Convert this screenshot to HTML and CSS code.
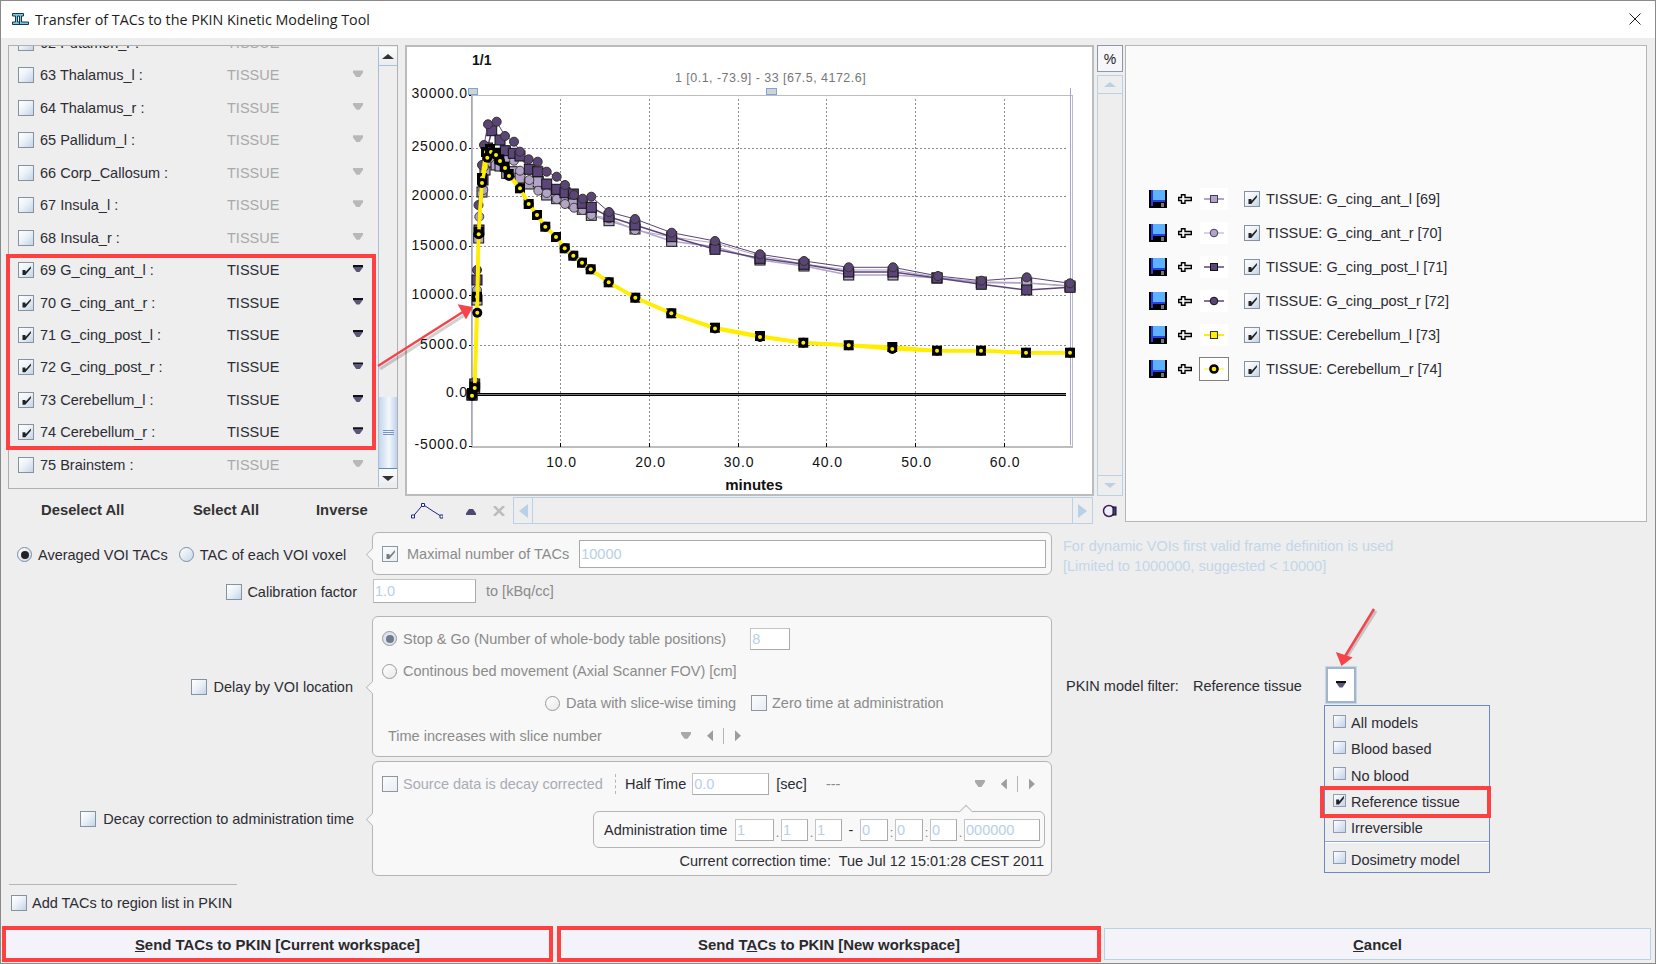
FILE: index.html
```html
<!DOCTYPE html>
<html lang="en">
<head>
<meta charset="utf-8">
<title>Transfer of TACs to the PKIN Kinetic Modeling Tool</title>
<link rel="stylesheet" href="styles.css">
</head>
<body>
<svg class="defs" width="0" height="0" aria-hidden="true">
  <symbol id="save" viewBox="0 0 18 18">
    <rect width="18" height="18" fill="#000"/>
    <rect x="2" y="0" width="2" height="16" fill="#2a3fe0"/>
    <rect x="4" y="0" width="12" height="10" fill="#5cb2ff"/>
    <rect x="4" y="10" width="12" height="2" fill="#2a3fe0"/>
    <rect x="12" y="13" width="3" height="4" fill="#777"/>
  </symbol>
  <symbol id="plus" viewBox="0 0 14 10">
    <path d="M3.500 .7h3.500v2.800h6.300v3H7v2.800H3.500V6.500H.7v-3h2.800z" fill="#fff" stroke="#000" stroke-width="1.400"/>
  </symbol>
</svg>

<header class="titlebar">
  <svg class="applogo" viewBox="0 0 17 12" width="17" height="12">
    <path d="M.5 .5h11v2.500H9.500v6h7v2.500H7.500V3H5.500v6H7.500v2.500H.5V9h3V3H.5z" fill="#7cc6e2" stroke="#12384a"/>
  </svg>
  <span class="title-text">Transfer of TACs to the PKIN Kinetic Modeling Tool</span>
  <svg class="close" viewBox="0 0 12 12" width="12" height="12"><path d="M.5.500l11 11M11.500.500l-11 11" stroke="#222" fill="none"/></svg>
</header>

<section class="top">
  <div class="list-col">
    <div class="listbox">
      <div class="rows">
        <div class="row off"><i class="cb"></i><span class="name">62 Putamen_r :</span><span class="kind">TISSUE</span><i class="tri"></i></div>
        <div class="row off"><i class="cb"></i><span class="name">63 Thalamus_l :</span><span class="kind">TISSUE</span><i class="tri"></i></div>
        <div class="row off"><i class="cb"></i><span class="name">64 Thalamus_r :</span><span class="kind">TISSUE</span><i class="tri"></i></div>
        <div class="row off"><i class="cb"></i><span class="name">65 Pallidum_l :</span><span class="kind">TISSUE</span><i class="tri"></i></div>
        <div class="row off"><i class="cb"></i><span class="name">66 Corp_Callosum :</span><span class="kind">TISSUE</span><i class="tri"></i></div>
        <div class="row off"><i class="cb"></i><span class="name">67 Insula_l :</span><span class="kind">TISSUE</span><i class="tri"></i></div>
        <div class="row off"><i class="cb"></i><span class="name">68 Insula_r :</span><span class="kind">TISSUE</span><i class="tri"></i></div>
        <div class="row"><i class="cb on"></i><span class="name">69 G_cing_ant_l :</span><span class="kind">TISSUE</span><i class="tri on"></i></div>
        <div class="row"><i class="cb on"></i><span class="name">70 G_cing_ant_r :</span><span class="kind">TISSUE</span><i class="tri on"></i></div>
        <div class="row"><i class="cb on"></i><span class="name">71 G_cing_post_l :</span><span class="kind">TISSUE</span><i class="tri on"></i></div>
        <div class="row"><i class="cb on"></i><span class="name">72 G_cing_post_r :</span><span class="kind">TISSUE</span><i class="tri on"></i></div>
        <div class="row"><i class="cb on"></i><span class="name">73 Cerebellum_l :</span><span class="kind">TISSUE</span><i class="tri on"></i></div>
        <div class="row"><i class="cb on"></i><span class="name">74 Cerebellum_r :</span><span class="kind">TISSUE</span><i class="tri on"></i></div>
        <div class="row off"><i class="cb"></i><span class="name">75 Brainstem :</span><span class="kind">TISSUE</span><i class="tri"></i></div>
      </div>
      <div class="vscroll">
        <div class="vbtn"><i class="glyph up"></i></div>
        <div class="vtrack"></div>
        <div class="vthumb"><b></b><b></b><b></b></div>
        <div class="vbtn"><i class="glyph down"></i></div>
      </div>
      <div class="redbox list-red"></div>
    </div>
    <div class="select-row">
      <span>Deselect All</span><span>Select All</span><span>Inverse</span>
    </div>
  </div>

  <div class="chart-col">
    <div class="chart-row">
      <div class="plot">
        <svg viewBox="405 45 689 450" width="689" height="450">
          <defs>
            <marker id="ls" markerUnits="userSpaceOnUse" markerWidth="13" markerHeight="13" refX="6.500" refY="6.500"><rect x="1.500" y="1.500" width="10" height="10" fill="#b2a3c9" stroke="#111"/></marker>
            <marker id="lc" markerUnits="userSpaceOnUse" markerWidth="13" markerHeight="13" refX="6.500" refY="6.500"><circle cx="6.500" cy="6.500" r="4.500" fill="#b2a3c9" stroke="#443"/></marker>
            <marker id="ds" markerUnits="userSpaceOnUse" markerWidth="13" markerHeight="13" refX="6.500" refY="6.500"><rect x="1.500" y="1.500" width="10" height="10" fill="#5a4478" stroke="#111"/></marker>
            <marker id="dc" markerUnits="userSpaceOnUse" markerWidth="13" markerHeight="13" refX="6.500" refY="6.500"><circle cx="6.500" cy="6.500" r="4.500" fill="#5a4478" stroke="#332"/></marker>
            <marker id="ys" markerUnits="userSpaceOnUse" markerWidth="13" markerHeight="13" refX="6.500" refY="6.500"><rect x="1.500" y="1.500" width="10" height="10" fill="#000"/><circle cx="6.500" cy="6.500" r="2" fill="#ffee00"/></marker>
            <marker id="yc" markerUnits="userSpaceOnUse" markerWidth="13" markerHeight="13" refX="6.500" refY="6.500"><circle cx="6.500" cy="6.500" r="5" fill="#000"/><circle cx="6.500" cy="6.500" r="2" fill="#ffee00"/></marker>
          </defs>

          <g class="grid">
            <path d="M560.500 99V446M649.500 99V446M738 99V446M826.500 99V446M915.500 99V446M1004 99V446"/>
            <path d="M472 148.500H1066M472 196.500H1066M472 246.500H1066M472 295.500H1066M472 345.500H1066"/>
          </g>
          <path class="frame" d="M472 95.500H1072V446M472 95.500V446"/>
          <path class="frame-b" d="M471 446.500H1073"/>
          <path class="ticks" d="M560.500 443V447M649.500 443V447M738 443V447M826.500 443V447M915.500 443V447M1004 443V447M469 95.500H472M469 148.500H472M469 196.500H472M469 246.500H472M469 295.500H472M469 345.500H472M469 446H472"/>
          <path class="zero" d="M472 394.500H1066"/>
          <path class="zero-in" d="M472 394.500H1066"/>
          <path class="range" d="M471.500 92V445M1070.500 88V445"/>
          <rect class="handle" x="468.500" y="88.500" width="9" height="6"/>
          <rect class="handle" x="766.500" y="88.500" width="10" height="6"/>

          <text class="ylab" x="468" y="98">30000.0</text>
          <text class="ylab" x="468" y="151">25000.0</text>
          <text class="ylab" x="468" y="200">20000.0</text>
          <text class="ylab" x="468" y="250">15000.0</text>
          <text class="ylab" x="468" y="299">10000.0</text>
          <text class="ylab" x="468" y="349">5000.0</text>
          <text class="ylab" x="468" y="397">0.0</text>
          <text class="ylab" x="468" y="449">-5000.0</text>
          <text class="xlab" x="561.500" y="467">10.0</text>
          <text class="xlab" x="650.500" y="467">20.0</text>
          <text class="xlab" x="739" y="467">30.0</text>
          <text class="xlab" x="827.500" y="467">40.0</text>
          <text class="xlab" x="916.500" y="467">50.0</text>
          <text class="xlab" x="1005" y="467">60.0</text>
          <text class="axis-title" x="754" y="490">minutes</text>
          <text class="page-no" x="472" y="65">1/1</text>
          <text class="range-text" x="675" y="82">1 [0.1, -73.9] - 33 [67.5, 4172.6]</text>

          <polyline class="s-light" marker-start="url(#ls)" marker-mid="url(#ls)" marker-end="url(#ls)" points="472,395 474.700,388 477,300 478.700,238 482,192 485,170 490,162 496,165 500,166 506.700,173.300 514,171.700 520,178 529.300,184 538.300,181.700 546.700,195 556.700,198.700 565,199 573.300,203.300 582.300,209.300 591.300,215.300 609,220.700 635,229 671.700,241.300 715,246.700 760,260 804,266 848.700,275 893,275 937,278 981.300,282 1026.700,283 1070,286"/>
          <polyline class="s-light2" marker-start="url(#lc)" marker-mid="url(#lc)" marker-end="url(#lc)" points="472,395 474.700,385 477,290 479.300,216.700 483.300,190 484,167 490,158 500,155 507,158 514,160.700 520,170.700 529.300,180 538.300,190.700 546.700,193 556.700,199 565,204 574,207.700 582.700,210 591.300,215 609,218.300 635,230 671.700,237 715,243 760,256 804,264 848.700,270 893,270 937,277 981.300,283 1026.700,283 1070,286"/>
          <polyline class="s-dark" marker-start="url(#ds)" marker-mid="url(#ds)" marker-end="url(#ds)" points="472,395 474.700,384 477,280 479,230 483,180 487.500,148 491.700,130.700 500,140 505.300,150.700 513.300,153.300 520,156 529.300,169.300 537.700,171.700 546.700,184 556.700,189.300 565,192.700 573.300,194 582.300,203.300 591.300,207.300 609,216.700 635,225 671.700,236.700 715,249.300 760,258.300 804,264.300 848.700,272 893,272 937,278 981.300,284.300 1026.700,290 1070,287.300"/>
          <polyline class="s-dark2" marker-start="url(#dc)" marker-mid="url(#dc)" marker-end="url(#dc)" points="472,395 474.700,382 477,270 478.500,205 482,165 484,145 488,124.300 496.700,121.700 505,136 514,141.700 520,151.700 528.700,159.300 537.700,161.700 546.700,171.700 556.700,176.700 565,185 574,195 582.700,198.700 591.300,196.700 609,212 635,219 671.700,232.700 715,241 760,254.300 804,261 848.700,267.300 893,267.300 938,276 981.300,280.700 1026.700,277.300 1070,283.300"/>
          <polyline class="s-yellow" marker-start="url(#ys)" marker-mid="url(#ys)" marker-end="url(#ys)" points="472,393 474.700,386.700 477,296.700 478.700,232 482,178 486,152 490,149 496,152.700 499.300,159.300 504.700,166.700 508.700,174 520,188.300 528.700,204 537,215 545.300,226.700 556,237 564.700,248.300 573.300,255.700 582,262.700 590.700,269.300 608.700,282.300 635.300,297.700 671.300,313.300 715,327.700 760,336 803.300,342.700 848.700,345.300 892.300,347 937,350.700 981,350.700 1026,352.700 1070,352.700"/>
          <polyline class="s-yellow" marker-start="url(#yc)" marker-mid="url(#yc)" marker-end="url(#yc)" points="472,395.700 474.700,388 477.300,312.700 478.700,234.300 482,183 487.300,157.700 491,152 496,155 500,161 505,168 509,176 520,188.300 528.700,204 537,215 545.300,226.700 556,237 564.700,248.300 573.300,255.700 582,262.700 590.700,269.300 608.700,282.300 635.300,297.700 671.300,313.300 715,328.500 760,337 803.300,342.700 848.700,345.300 892.300,349 937,350.700 981,350.700 1026,352.700 1070,352.700"/>
        </svg>
      </div>
      <div class="side">
        <div class="pct">%</div>
        <div class="side-scroll">
          <div class="side-btn"><i class="glyph up soft"></i></div>
          <div class="side-btn"><i class="glyph down soft"></i></div>
        </div>
      </div>
    </div>
    <div class="tools">
      <svg class="curve" viewBox="0 0 32 16" width="32" height="16">
        <path d="M2 13.500L12 1.500L21 7.500L30.500 13.500" fill="none" stroke="#1a2a80"/>
        <path d="M.5 12h3v3h-3zM10.500.5h3v3h-3zM29 12h3v3h-3z" fill="#fff" stroke="#1a2a80"/>
      </svg>
      <i class="mini-up"></i>
      <svg class="cross" viewBox="0 0 12 10" width="12" height="10"><path d="M1 0l10 10M11 0L1 10" stroke="#bdbdbd" stroke-width="2.500"/></svg>
      <div class="hscroll">
        <div class="hbtn"><i class="glyph left soft"></i></div>
        <div class="hbtn"><i class="glyph right soft"></i></div>
      </div>
      <svg class="camera" viewBox="0 0 16 14" width="16" height="14">
        <circle cx="7" cy="7" r="5.500" fill="#e8f0ff" stroke="#4a1a5a" stroke-width="1.500"/>
        <rect x="11" y="3" width="3" height="8" fill="#4a3a8a" stroke="#111"/>
      </svg>
    </div>
  </div>

  <aside class="legend">
    <div class="leg"><svg class="i-save"><use href="#save"/></svg><svg class="i-plus"><use href="#plus"/></svg>
      <span class="swatch"><svg viewBox="0 0 28 22" width="28" height="22"><path class="sw-light" d="M4 11h20"/><rect class="sw-ls" x="10.500" y="7.500" width="7" height="7"/></svg></span>
      <i class="cb on"></i><span class="leg-text">TISSUE: G_cing_ant_l [69]</span></div>
    <div class="leg"><svg class="i-save"><use href="#save"/></svg><svg class="i-plus"><use href="#plus"/></svg>
      <span class="swatch"><svg viewBox="0 0 28 22" width="28" height="22"><path class="sw-light thin" d="M4 11h20"/><circle class="sw-ls" cx="14" cy="11" r="3.800"/></svg></span>
      <i class="cb on"></i><span class="leg-text">TISSUE: G_cing_ant_r [70]</span></div>
    <div class="leg"><svg class="i-save"><use href="#save"/></svg><svg class="i-plus"><use href="#plus"/></svg>
      <span class="swatch"><svg viewBox="0 0 28 22" width="28" height="22"><path class="sw-dark" d="M4 11h20"/><rect class="sw-ds" x="10.500" y="7.500" width="7" height="7"/></svg></span>
      <i class="cb on"></i><span class="leg-text">TISSUE: G_cing_post_l [71]</span></div>
    <div class="leg"><svg class="i-save"><use href="#save"/></svg><svg class="i-plus"><use href="#plus"/></svg>
      <span class="swatch"><svg viewBox="0 0 28 22" width="28" height="22"><path class="sw-dark" d="M4 11h20"/><circle class="sw-ds" cx="14" cy="11" r="3.800"/></svg></span>
      <i class="cb on"></i><span class="leg-text">TISSUE: G_cing_post_r [72]</span></div>
    <div class="leg"><svg class="i-save"><use href="#save"/></svg><svg class="i-plus"><use href="#plus"/></svg>
      <span class="swatch"><svg viewBox="0 0 28 22" width="28" height="22"><path class="sw-yellow" d="M4 11h20"/><rect class="sw-ys" x="10.500" y="7.500" width="7" height="7"/></svg></span>
      <i class="cb on"></i><span class="leg-text">TISSUE: Cerebellum_l [73]</span></div>
    <div class="leg"><svg class="i-save"><use href="#save"/></svg><svg class="i-plus"><use href="#plus"/></svg>
      <span class="swatch framed"><svg viewBox="0 0 28 22" width="28" height="22"><path class="sw-yellow thin" d="M4 11h20"/><circle class="sw-yc" cx="14" cy="11" r="3.600"/></svg></span>
      <i class="cb on"></i><span class="leg-text">TISSUE: Cerebellum_r [74]</span></div>
  </aside>
</section>

<section class="lower">
  <div class="cell mode-cell">
    <i class="rb on"></i><span class="m1">Averaged VOI TACs</span>
    <i class="rb rb2"></i><span class="m1">TAC of each VOI voxel</span>
  </div>
  <div class="panel p1">
    <i class="cb on dim"></i><span class="dis t1">Maximal number of TACs</span>
    <div class="field grow">10000</div>
  </div>
  <div class="hint">
    <div>For dynamic VOIs first valid frame definition is used</div>
    <div>[Limited to 1000000, suggested &lt; 10000]</div>
  </div>

  <div class="cell end pad15 cal-cell"><i class="cb"></i><span class="m2">Calibration factor</span></div>
  <div class="cal"><div class="field w103">1.0</div><span class="dis">to [kBq/cc]</span></div>
  <div class="empty"></div>

  <div class="cell end pad19"><i class="cb"></i><span class="m2b">Delay by VOI location</span></div>
  <div class="panel p2">
    <div class="pr"><i class="rb dimr on"></i><span class="dis gap6">Stop &amp; Go (Number of whole-body table positions)</span><div class="field w40">8</div></div>
    <div class="pr"><i class="rb dimr"></i><span class="dis gap6">Continous bed movement (Axial Scanner FOV) [cm]</span></div>
    <div class="pr ind163"><i class="rb dimr"></i><span class="dis gap6 w173">Data with slice-wise timing</span><i class="cb dim"></i><span class="dis gap5">Zero time at administration</span></div>
    <div class="pr ind6"><span class="dis w293">Time increases with slice number</span><i class="tri grey"></i><i class="arrow l"></i><i class="vsep"></i><i class="arrow r"></i></div>
  </div>
  <div class="filter-cell">
    <div class="filter">
      <span class="f1">PKIN model filter:</span><span class="f2">Reference tissue</span>
      <div class="filter-btn"><i class="tri on"></i></div>
    </div>
    <div class="menu">
      <div class="mi"><i class="mc"></i>All models</div>
      <div class="mi"><i class="mc"></i>Blood based</div>
      <div class="mi"><i class="mc"></i>No blood</div>
      <div class="mi"><i class="mc on"></i>Reference tissue</div>
      <div class="mi"><i class="mc"></i>Irreversible</div>
      <div class="msep"></div>
      <div class="mi"><i class="mc"></i>Dosimetry model</div>
      <div class="redbox menu-red"></div>
    </div>
  </div>

  <div class="cell end pad18"><i class="cb"></i><span class="m2b">Decay correction to administration time</span></div>
  <div class="panel p3">
    <div class="p3-row">
      <i class="cb dim"></i><span class="faint t3">Source data is decay corrected</span><i class="dash"></i>
      <span class="m3">Half Time</span><div class="field w77">0.0</div><span class="m3 sec">[sec]</span><span class="dis dashes">---</span>
      <i class="tri grey t-grey"></i><i class="arrow l"></i><i class="vsep"></i><i class="arrow r"></i>
    </div>
    <div class="admin">
      <span class="m3 adm-label">Administration time</span>
      <div class="field w39">1</div><i class="dot">.</i>
      <div class="field w27">1</div><i class="dot">.</i>
      <div class="field w27">1</div><span class="hy">-</span>
      <div class="field w28">0</div><i class="dot">:</i>
      <div class="field w28">0</div><i class="dot">:</i>
      <div class="field w27">0</div><i class="dot">.</i>
      <div class="field w76">000000</div>
    </div>
    <div class="current">Current correction time:&nbsp; Tue Jul 12 15:01:28 CEST 2011</div>
  </div>
</section>

<div class="rule"></div>
<div class="add-row"><i class="cb"></i><span class="m2b">Add TACs to region list in PKIN</span></div>

<footer class="footer">
  <div class="btn red b1"><span><u>S</u>end TACs to PKIN [Current workspace]</span></div>
  <div class="btn red b2"><span>Send T<u>A</u>Cs to PKIN [New workspace]</span></div>
  <div class="btn b3"><span><u>C</u>ancel</span></div>
</footer>

<svg class="notes" viewBox="0 0 1656 964" width="1656" height="964" aria-hidden="true">
  <g class="note-shadow">
    <path d="M380 369L468 313"/><path d="M1376 611L1345 660"/>
  </g>
  <g class="note-arrow">
    <path d="M378 366L466 310"/><path d="M460 306L471 308L466 317Z"/>
    <path d="M1374 609L1344 658"/><path d="M1338 654L1342 664L1350 658Z"/>
  </g>
</svg>
</body>
</html>
```

FILE: styles.css
```css
* { box-sizing: border-box; }
html, body { margin: 0; padding: 0; }
body {
  width: 1656px; height: 964px; overflow: hidden; position: relative;
  background: #eeeeee; color: #2c2c34;
  font-family: "Liberation Sans", Arial, sans-serif; font-size: 14.500px;
}
body::after {
  content: ""; position: absolute; inset: 0; border: 1px solid #8a8a8a; pointer-events: none;
}
i { font-style: normal; display: block; flex: none; }
.defs { position: absolute; }

/* title */
.titlebar { height: 38px; background: #fff; display: flex; align-items: center; padding: 0 16px 0 12px; }
.applogo { flex: none; }
.title-text { margin-left: 6px; font-family: "Open Sans", sans-serif; font-size: 14.300px; color: #1d1d1d; flex: 1; }
.close { flex: none; margin-right: -1px; }

/* top section */
.top { display: flex; align-items: flex-start; padding: 7px 0 0 8px; height: 487px; }
.list-col { width: 390px; flex: none; }
.listbox { height: 444px; border: 1px solid #b0b0b0; position: relative; overflow: visible; display: flex; background: #eee; }
.rows { width: 369px; height: 442px; overflow: hidden; padding-top: 0; }
.row { height: 32.460px; display: flex; align-items: center; padding-left: 9px; }
.row:first-child { margin-top: -19.300px; }
.row .name { width: 187px; margin-left: 6px; white-space: nowrap; }
.row .kind { width: 126px; }
.row.off .kind { color: #a9a9a9; }

.cb {
  width: 16px; height: 16px; border: 1px solid #84939f; position: relative;
  background: linear-gradient(135deg, #ffffff 0%, #edf2f8 45%, #c3d4e8 100%);
}
.cb.on::after {
  content: ""; position: absolute; inset: 0; background: #222;
  clip-path: polygon(25% 50%, 45% 50%, 48% 62%, 85% 22%, 85% 38%, 45% 85%, 25% 85%);
}
.cb.dim { border-color: #8d97a4; background: linear-gradient(135deg, #fbfbfb, #e8eef5); }
.cb.dim::after { background: #7b7b7b; }

.tri {
  width: 10px; height: 7px; margin-top: -3px; background: #b8b8b8;
  clip-path: polygon(0 0, 100% 0, 100% 30%, 65% 100%, 35% 100%, 0 30%);
}
.tri.on { background: linear-gradient(#111 0 30%, #5c5479 30%); }
.tri.grey { background: #a9a9a9; margin-top: -1px; }

.vscroll { width: 19px; margin: 1px 0 1px 9px; display: flex; flex-direction: column; border-left: 1px solid #a8bed6; flex: none; }
.vbtn { height: 19px; flex: none; display: flex; align-items: center; justify-content: center; background: linear-gradient(#fbfbfb, #e9ecf0); border-bottom: 1px solid #a8c2de; }
.vbtn:last-child { border-bottom: 0; border-top: 1px solid #5f86c0; }
.vtrack { height: 331px; background: #eee; }
.vthumb {
  flex: 1; display: flex; flex-direction: column; align-items: center; justify-content: center; gap: 1px;
  background: linear-gradient(90deg, #c2d5ec, #f4f8fc 55%, #bed2ea);
}
.vthumb b { display: block; width: 11px; height: 1px; background: #7796c4; }
.glyph { width: 0; height: 0; border-style: solid; border-color: transparent; }
.glyph.up { border-width: 0 6px 5px; border-bottom-color: #333; }
.glyph.down { border-width: 5px 6px 0; border-top-color: #333; }
.glyph.left { border-width: 7px 9px 7px 0; border-right-color: #b8d0e8; }
.glyph.right { border-width: 7px 0 7px 9px; border-left-color: #b8d0e8; }
.glyph.up.soft { border-bottom-color: #b8d0e8; }
.glyph.down.soft { border-top-color: #b8d0e8; }

.redbox { position: absolute; border: 4px solid #ff4040; pointer-events: none; }
.list-red { left: -3px; top: 208px; width: 370px; height: 196px; }

.select-row {
  display: grid; grid-template-columns: 152px 123px auto; padding: 6px 0 0 33px; height: 36px; align-items: center;
  font-weight: bold; font-size: 14.800px; color: #333;
}

/* chart */
.chart-col { width: 718px; margin-left: 7px; flex: none; }
.chart-row { display: flex; gap: 3px; height: 451px; }
.plot { width: 689px; height: 451px; background: #fff; box-shadow: inset 0 0 0 2px #bcbcbc; flex: none; line-height: 0; }
.grid path { fill: none; stroke: #8c8c8c; stroke-width: 1; stroke-dasharray: 2 2; shape-rendering: crispEdges; }
.frame { fill: none; stroke: #bdbdbd; stroke-width: 1; shape-rendering: crispEdges; }
.frame-b { fill: none; stroke: #bdbdbd; stroke-width: 2; shape-rendering: crispEdges; }
.ticks { fill: none; stroke: #000; shape-rendering: crispEdges; }
.zero { fill: none; stroke: #000; stroke-width: 3; shape-rendering: crispEdges; }
.zero-in { fill: none; stroke: #777; stroke-width: 1; shape-rendering: crispEdges; }
.range { fill: none; stroke: #a7a3d8; shape-rendering: crispEdges; }
.handle { fill: #d2d2d2; stroke: #7aa7de; shape-rendering: crispEdges; }
.ylab, .xlab { font-family: "Liberation Sans", sans-serif; font-size: 14px; letter-spacing: .85px; fill: #111; }
.ylab { text-anchor: end; }
.xlab, .axis-title { text-anchor: middle; }
.axis-title { font-family: "Liberation Sans", sans-serif; font-size: 15px; font-weight: bold; fill: #111; }
.page-no { font-family: "Liberation Sans", sans-serif; font-size: 14px; font-weight: bold; fill: #111; }
.range-text { font-family: "Liberation Sans", sans-serif; font-size: 12.500px; fill: #777; letter-spacing: .47px; }
.s-light { fill: none; stroke: #b2a3c9; stroke-width: 1.500; }
.s-light2 { fill: none; stroke: #b2a3c9; stroke-width: 1; }
.s-dark { fill: none; stroke: #5a4478; stroke-width: 1.500; }
.s-dark2 { fill: none; stroke: #5a4478; stroke-width: 1; }
.s-yellow { fill: none; stroke: #ffee00; stroke-width: 3.500; }

.side { width: 26px; flex: none; display: flex; flex-direction: column; gap: 3px; }
.pct { height: 27px; background: #f7f6fb; border: 1px solid #8f98a8; text-align: center; line-height: 26px; font-size: 14px; color: #222; }
.side-scroll { height: 421px; border: 1px solid #b9d2e6; display: flex; flex-direction: column; justify-content: space-between; }
.side-btn { height: 18px; display: flex; align-items: center; justify-content: center; border-bottom: 1px solid #b9d2e6; }
.side-btn:last-child { border-bottom: 0; border-top: 1px solid #b9d2e6; height: 20px; }
.tools { display: flex; align-items: center; height: 28px; padding: 1px 0 0 6px; }
.curve { flex: none; margin-right: 23px; }
.mini-up { width: 10px; height: 6px; background: #4b4b72; clip-path: polygon(30% 0, 70% 0, 100% 70%, 100% 100%, 0 100%, 0 70%); margin-top: 3px; }
.cross { flex: none; margin-left: 17px; }
.hscroll { width: 580px; height: 27px; margin-left: 8px; border: 1px solid #b9d2e6; display: flex; justify-content: space-between; flex: none; }
.hbtn { width: 19px; display: flex; align-items: center; justify-content: center; border-right: 1px solid #b9d2e6; }
.hbtn:last-child { border-right: 0; border-left: 1px solid #b9d2e6; width: 20px; }
.camera { flex: none; margin-left: 9px; }

/* legend */
.legend { width: 522px; height: 477px; margin-left: 2px; background: #fafafa; border: 1px solid #b6b6b6; padding-top: 136px; flex: none; }
.leg { height: 34px; display: flex; align-items: center; padding-left: 23px; }
.i-save { width: 18px; height: 18px; flex: none; }
.i-plus { width: 14px; height: 10px; margin-left: 11px; flex: none; }
.swatch { width: 28px; height: 22px; margin-left: 8px; background: #fff; flex: none; line-height: 0; }
.swatch.framed { outline: 1px solid #808080; }
.leg .cb { margin-left: 16px; }
.leg-text { margin-left: 6px; white-space: nowrap; }
.sw-light, .sw-dark, .sw-yellow { fill: none; stroke-width: 2; }
.sw-light { stroke: #b2a3c9; }
.sw-dark { stroke: #5a4478; stroke-width: 1.500; }
.sw-yellow { stroke: #ffee00; }
.thin { stroke-width: 1; }
.sw-ls { fill: #b2a3c9; stroke: #443a55; }
.sw-ds { fill: #5a4478; stroke: #111; }
.sw-ys { fill: #ffee00; stroke: #333; }
.sw-yc { fill: #ffee00; stroke: #000; stroke-width: 2.500; }

/* lower */
.lower {
  display: grid; grid-template-columns: 372px 680px 1fr;
  grid-template-rows: 43px 33px 141px 115px; row-gap: 4px;
  padding-top: 7px;
}
.cell { display: flex; align-items: center; white-space: nowrap; padding-top: 1px; }
.mode-cell { padding-left: 17px; padding-top: 2px; }
.cal-cell { height: 24px; }
.end { justify-content: flex-end; }
.pad15 { padding-right: 15px; }
.pad19 { padding-right: 19px; }
.pad18 { padding-right: 18px; }
.m1 { margin-left: 6px; }
.m2 { margin-left: 5px; }
.m2b { margin-left: 7px; }
.m3 { color: #2c2c34; }
.rb {
  width: 15px; height: 15px; border-radius: 50%; border: 1px solid #7c8ea5; position: relative;
  background: linear-gradient(135deg, #fff, #c7d7e9);
}
.rb.on::after { content: ""; position: absolute; inset: 2.500px; border-radius: 50%; background: #222; }
.rb2 { margin-left: 11px; }
.rb.dimr { border-color: #999; background: linear-gradient(135deg, #fff, #e9e9e9); }
.rb.dimr.on { background: #dfe3ea; }
.rb.dimr.on::after { background: #6f7b90; }

.panel {
  position: relative; background: #f8f8f8; border: 1px solid #b5b5b5; border-radius: 6px; white-space: nowrap;
}
.panel::before {
  content: ""; position: absolute; left: -6px; top: 50%; width: 10px; height: 10px; margin-top: -5px;
  background: #f8f8f8; border-left: 1px solid #b5b5b5; border-bottom: 1px solid #b5b5b5;
  transform: rotate(45deg) scale(.85);
}
.dis { color: #8b8b8b; }
.faint { color: #a7adb5; }
.field {
  height: 22px; background: #fff; border: 1px solid #c4c4c4; border-right-color: #aaa; border-bottom-color: #aaa;
  color: #b8cfe7; font-size: 14.500px; line-height: 20px; padding-left: 1px; flex: none;
}
.p1 { display: flex; align-items: center; padding: 1px 5px 0 9px; }
.t1 { margin-left: 9px; }
.grow { flex: 1; height: 28px; line-height: 26px; margin-left: 10px; border: 1px solid #aaa; }
.hint { padding: 4px 0 0 11px; color: #c3d6ea; font-size: 14.500px; line-height: 20px; }
.cal { display: flex; align-items: center; align-self: start; height: 24px; padding-left: 1px; }
.w103 { width: 103px; height: 24px; line-height: 22px; margin-right: 10px; }

.p2 { padding: 5.500px 0 0 9px; }
.pr { height: 32.400px; display: flex; align-items: center; }
.gap6 { margin-left: 6px; }
.gap5 { margin-left: 5px; }
.w40 { width: 40px; margin-left: 24px; }
.ind163 { margin-left: 163px; }
.ind6 { margin-left: 6px; }
.w173 { width: 185px; }
.w293 { width: 293px; }
.arrow { width: 6px; height: 11px; background: #9d9d9d; }
.arrow.l { clip-path: polygon(100% 0, 100% 100%, 0 50%); margin-left: 16px; }
.arrow.r { clip-path: polygon(0 0, 0 100%, 100% 50%); margin-left: 11px; }
.vsep { width: 1px; height: 16px; background: #b5b5b5; margin-left: 10px; }

.p3 { padding: 10px 6px 0 9px; }
.p3-row { display: flex; align-items: center; height: 24px; }
.t3 { margin-left: 5px; width: 212px; }
.dash { width: 0; height: 20px; border-left: 1px dashed #b5b5b5; }
.p3-row .m3 { margin-left: 9px; }
.w77 { width: 77px; margin-left: 6px; }
.p3-row .sec { margin-left: 7px; }
.dashes { margin-left: 19px; width: 149px; }
.t-grey { margin-top: -1px; }
.admin {
  position: relative; display: flex; align-items: center; height: 37px; margin: 15px 0 0 211px; width: 452px;
  border: 1px solid #b5b5b5; border-radius: 6px; padding-left: 10px; background: #f8f8f8;
}
.admin::before {
  content: ""; position: absolute; left: 366px; top: -6px; width: 11px; height: 11px;
  background: #f8f8f8; border-left: 1px solid #b5b5b5; border-top: 1px solid #b5b5b5;
  transform: rotate(45deg) scale(.85);
}
.adm-label { width: 131px; flex: none; }
.w39 { width: 39px; } .w27 { width: 27px; } .w28 { width: 28px; } .w76 { width: 76px; }
.dot { width: 7px; text-align: center; color: #a57c3c; font-size: 13px; padding-top: 5px; }
.hy { width: 18px; text-align: center; }
.current { text-align: right; margin-top: 3px; padding-right: 1px; line-height: 20px; }

/* PKIN filter */
.filter-cell { grid-row: span 2; position: relative; }
.filter { display: flex; align-items: center; padding: 51px 0 0 14px; }
.f1 { width: 127px; flex: none; padding-top: 2px; }
.f2 { width: 133px; flex: none; padding-top: 2px; }
.filter-btn {
  width: 30px; height: 36px; background: #fff; border: 2px solid #a6b4c8; outline: 1px solid #c4d8ec;
  display: flex; align-items: center; justify-content: center; flex: none;
}
.filter-btn .tri { margin-top: -2px; }
.menu {
  position: absolute; left: 272px; top: 89px; width: 166px; height: 168px; border: 1px solid #6a8ac0;
  padding-top: 4px; background: #eee;
}
.mi { height: 26.300px; display: flex; align-items: center; padding-left: 8px; }
.mc {
  width: 13px; height: 13px; margin: -4px 5px 0 0; border: 1px solid #8e9cb4; position: relative;
  background: linear-gradient(135deg, #fff, #c3d3e8);
}
.mc.on::after {
  content: ""; position: absolute; inset: 0; background: #222;
  clip-path: polygon(20% 45%, 45% 45%, 48% 60%, 90% 10%, 90% 35%, 45% 90%, 20% 90%);
}
.msep { height: 2px; background: #8ea6cc; border-bottom: 1px solid #fff; margin: 0 0 3px; }
.menu-red { left: -5px; top: 80px; width: 171px; height: 32px; }

/* bottom */
.rule { width: 228px; height: 1px; background: #b5b5b5; margin: 8px 0 0 9px; }
.add-row { height: 24px; display: flex; align-items: center; padding-left: 11px; margin-top: 6px; }
.add-row .m2b { margin-left: 5px; }
.footer { display: flex; align-items: center; height: 36px; margin: 11px 0 0 2px; }
.btn { display: flex; align-items: center; justify-content: center; background: #f4f3fa; font-weight: bold; font-size: 14.900px; color: #2a2a2a; flex: none; padding-top: 2px; }
.btn.red { border: 4px solid #ff4040; height: 36px; }
.b1 { width: 551px; }
.b2 { width: 544px; margin-left: 4px; }
.b3 { width: 547px; height: 32px; margin-left: 3px; border: 1px solid #b9d2e6; }

/* annotation arrows */
.notes { position: absolute; left: 0; top: 0; pointer-events: none; }
.note-shadow path { fill: none; stroke: #000; stroke-opacity: .18; stroke-width: 3; }
.note-arrow path { fill: #f5454a; stroke: #f5454a; stroke-width: 2.500; }
```
